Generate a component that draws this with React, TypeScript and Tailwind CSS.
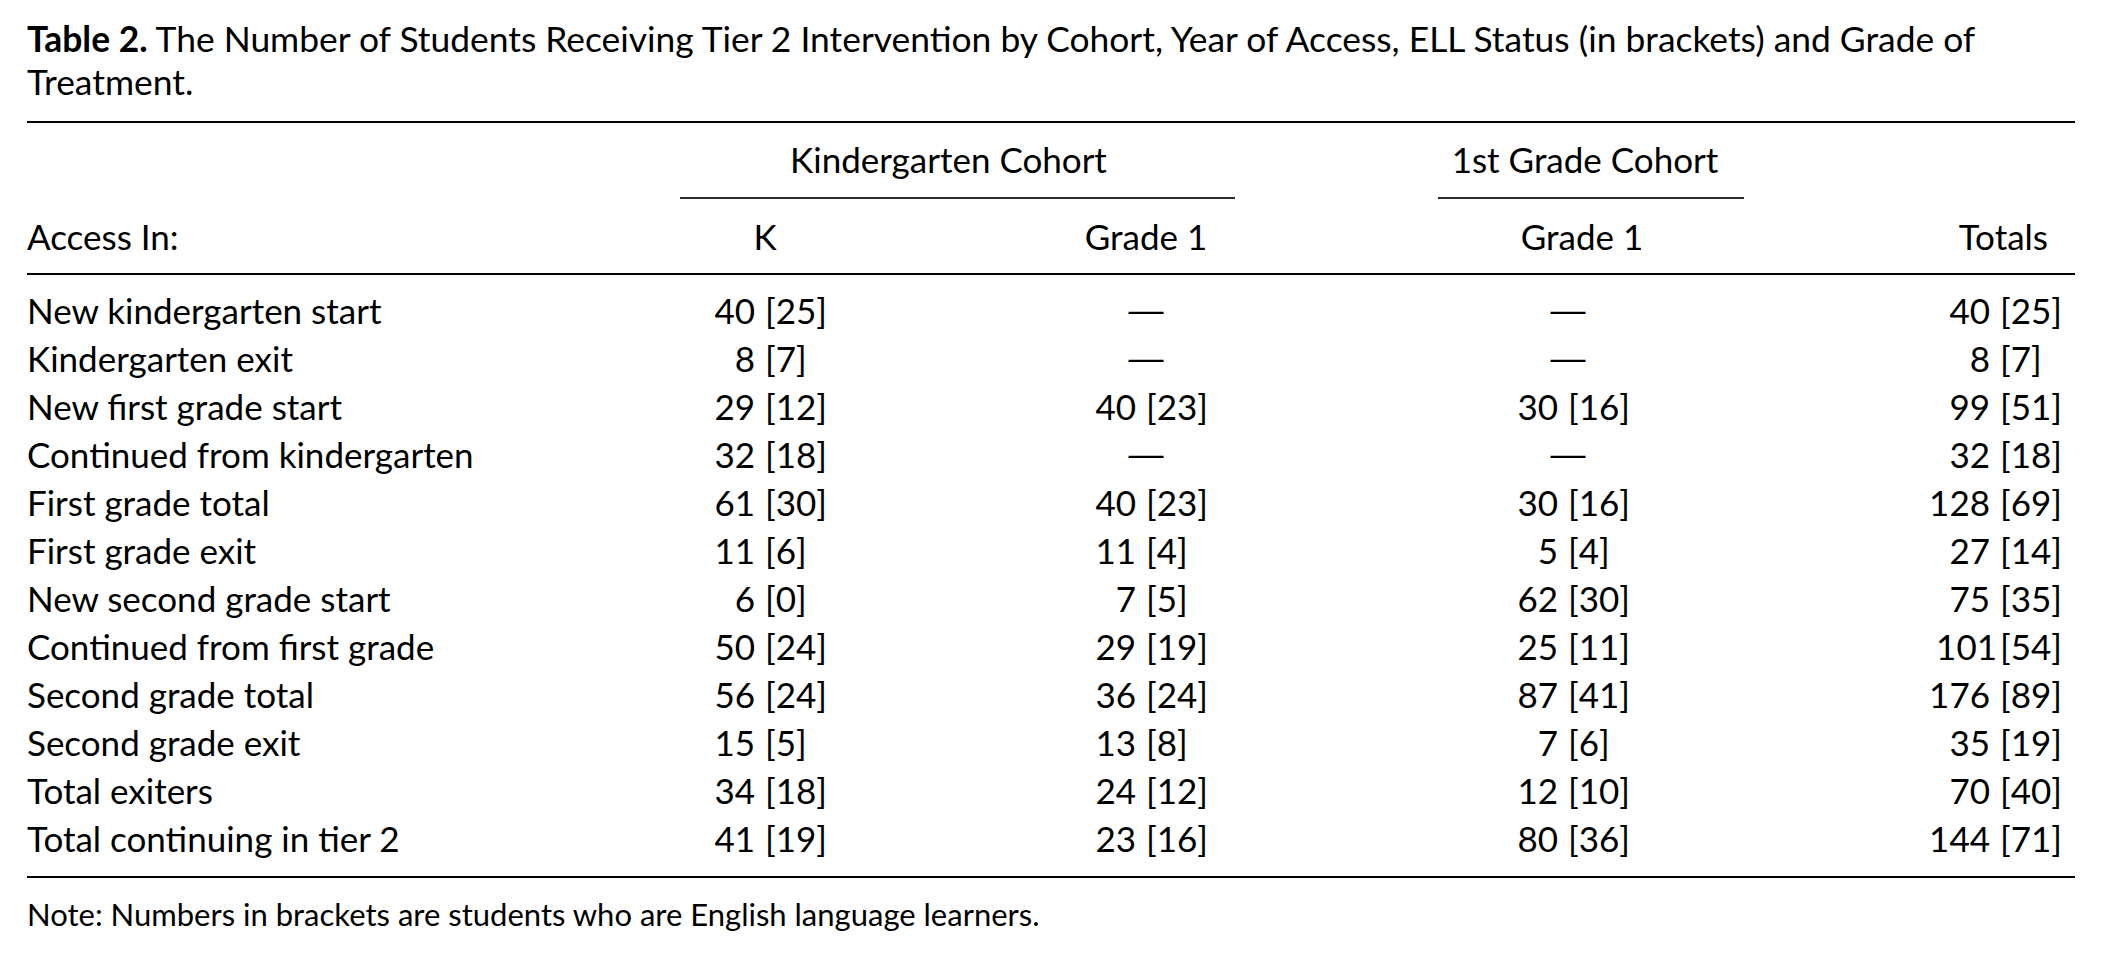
const rows: [string, string, string, string, string][] = [
  ["New kindergarten start", "40 [25]", "—", "—", "40 [25]"],
  ["Kindergarten exit", "8 [7]", "—", "—", "8 [7]"],
  ["New first grade start", "29 [12]", "40 [23]", "30 [16]", "99 [51]"],
  ["Continued from kindergarten", "32 [18]", "—", "—", "32 [18]"],
  ["First grade total", "61 [30]", "40 [23]", "30 [16]", "128 [69]"],
  ["First grade exit", "11 [6]", "11 [4]", "5 [4]", "27 [14]"],
  ["New second grade start", "6 [0]", "7 [5]", "62 [30]", "75 [35]"],
  ["Continued from first grade", "50 [24]", "29 [19]", "25 [11]", "101[54]"],
  ["Second grade total", "56 [24]", "36 [24]", "87 [41]", "176 [89]"],
  ["Second grade exit", "15 [5]", "13 [8]", "7 [6]", "35 [19]"],
  ["Total exiters", "34 [18]", "24 [12]", "12 [10]", "70 [40]"],
  ["Total continuing in tier 2", "41 [19]", "23 [16]", "80 [36]", "144 [71]"],
];

const colStart = ["col-start-2", "col-start-4", "col-start-6", "col-start-8"];

const Value = ({ value, className }: { value: string; className: string }) => {
  if (value === "—") {
    return (
      <div className={`${className} text-center [font-family:'Liberation_Sans',sans-serif]`}>
        —
      </div>
    );
  }
  const at = value.indexOf("[");
  const num = value.slice(0, at).trim();
  const tight = value[at - 1] !== " ";
  return (
    <div className={`${className} grid grid-cols-2`}>
      <span className={`text-right ${tight ? "pr-[3px]" : "pr-[10px]"}`}>{num}</span>
      <span className="text-left">{value.slice(at)}</span>
    </div>
  );
};

export default function App() {
  return (
    <div className="min-h-screen bg-white text-black [font-family:'Lato',sans-serif] text-[35px]">
      <div className="w-[2048px] ml-[27px]">
        <p className="pt-[17px] pb-[1px] leading-[43px] text-[35.4px]">
          <span className="font-bold">Table 2.</span> The Number of Students Receiving Tier 2
          Intervention by Cohort, Year of Access, ELL Status (in brackets) and Grade of
          <br />
          Treatment.
        </p>

        <div className="mt-[17px] h-[2px] bg-black" />

        <div className="grid grid-cols-[638px_200px_181px_200px_222px_200px_257px_150px] leading-[48px]">
          <div className="col-start-2 col-span-3 ml-[15px] mr-[11px] pt-[12px] pb-[14px] pr-[18px] text-center border-b-2 border-[#2a2a2a]">
            Kindergarten Cohort
          </div>
          <div className="col-start-5 col-span-3 ml-[192px] mr-[181px] pt-[12px] pb-[14px] pr-[12px] text-center border-b-2 border-[#2a2a2a]">
            1st Grade Cohort
          </div>

          <div className="col-start-1 pt-[13px] pb-[13px]">Access In:</div>
          <div className="col-start-2 pt-[13px] pb-[13px] text-center">K</div>
          <div className="col-start-4 pt-[13px] pb-[13px] text-center">Grade 1</div>
          <div className="col-start-6 pt-[13px] pb-[13px] pl-[28px] text-center">Grade 1</div>
          <div className="col-start-8 pt-[13px] pb-[13px] pr-[27px] text-right">Totals</div>
        </div>

        <div className="h-[2px] bg-black" />

        <div className="grid grid-cols-[638px_200px_181px_200px_222px_200px_257px_150px] auto-rows-[48px] leading-[48px] pt-[11px] pb-[14px]">
          {rows.map(([label, ...values]) => (
            <div key={label} className="contents">
              <div className="col-start-1 whitespace-nowrap">{label}</div>
              {values.map((v, i) => (
                <Value key={i} value={v} className={colStart[i]} />
              ))}
            </div>
          ))}
        </div>

        <div className="h-[2px] bg-black" />

        <p className="mt-[12px] leading-[48px] text-[31px]">
          Note: Numbers in brackets are students who are English language learners.
        </p>
      </div>
    </div>
  );
}
